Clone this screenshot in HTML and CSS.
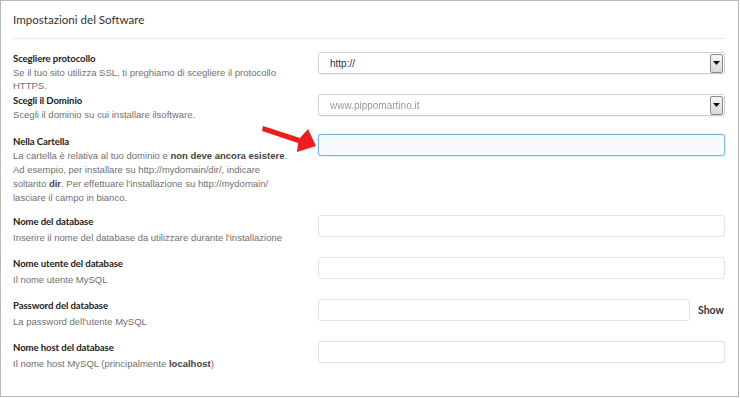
FILE: index.html
```html
<!DOCTYPE html>
<html lang="it">
<head>
<meta charset="utf-8">
<title>Impostazioni del Software</title>
<link rel="stylesheet" href="styles.css">
</head>
<body>
<div class="frame">
  <h2 class="title">Impostazioni del Software</h2>
  <div class="divider"></div>
  <div class="form">
    <div class="row r1">
      <div class="info">
        <div class="label">Scegliere protocollo</div>
        <div class="desc tight">Se il tuo sito utilizza SSL, ti preghiamo di scegliere il protocollo HTTPS.</div>
      </div>
      <div class="field">
        <div class="select"><span class="val">http://</span><span class="drop"><svg width="7" height="4" viewBox="0 0 7 4"><path d="M0 0H7L3.5 4Z" fill="#111"/></svg></span></div>
      </div>
    </div>
    <div class="row r2">
      <div class="info">
        <div class="label">Scegli il Dominio</div>
        <div class="desc">Scegli il dominio su cui installare ilsoftware.</div>
      </div>
      <div class="field">
        <div class="select"><span class="val blur">www.pippomartino.it</span><span class="drop"><svg width="7" height="4" viewBox="0 0 7 4"><path d="M0 0H7L3.5 4Z" fill="#111"/></svg></span></div>
      </div>
    </div>
    <div class="row r3">
      <div class="info">
        <div class="label">Nella Cartella</div>
        <div class="desc">La cartella è relativa al tuo dominio e <b>non deve ancora esistere</b>. Ad esempio, per installare su http://mydomain/dir/, indicare soltanto <b>dir</b>. Per effettuare l'installazione su http://mydomain/ lasciare il campo in bianco.</div>
      </div>
      <div class="field">
        <div class="input focus"></div>
      </div>
      <svg class="arrow" width="70" height="32" viewBox="0 0 70 32">
        <path d="M12 0 L49 12 L57 3 L65 20 L46 26 L47 17 L11 5 Z" fill="#ee1c1c"/>
      </svg>
    </div>
    <div class="row r4 after3">
      <div class="info">
        <div class="label">Nome del database</div>
        <div class="desc">Inserire il nome del database da utilizzare durante l'installazione</div>
      </div>
      <div class="field"><div class="input"></div></div>
    </div>
    <div class="row r4">
      <div class="info">
        <div class="label">Nome utente del database</div>
        <div class="desc">Il nome utente MySQL</div>
      </div>
      <div class="field"><div class="input"></div></div>
    </div>
    <div class="row r4">
      <div class="info">
        <div class="label">Password del database</div>
        <div class="desc">La password dell'utente MySQL</div>
      </div>
      <div class="field pw"><div class="input"></div><span class="show">Show</span></div>
    </div>
    <div class="row r4">
      <div class="info">
        <div class="label">Nome host del database</div>
        <div class="desc">Il nome host MySQL (principalmente <b>localhost</b>)</div>
      </div>
      <div class="field"><div class="input"></div></div>
    </div>
  </div>
</div>
</body>
</html>
```

FILE: styles.css
```css
* { box-sizing: border-box; }
html, body { margin: 0; padding: 0; background: #fff; }
.frame {
  width: 739px;
  height: 397px;
  border: 1px solid #b8b8b8;
  padding: 0 12px 0 12px;
  font-family: "Liberation Sans", Arial, sans-serif;
  position: relative;
}
.title {
  margin: 0;
  padding-top: 10px;
  height: 37px;
  font-family: Lato, "Open Sans", sans-serif;
  font-weight: 400;
  font-size: 11.6px;
  line-height: 17px;
  color: #333;
}
.divider {
  height: 1px;
  background: #e8e8e8;
}
.form { display: flex; flex-direction: column; }
.row {
  display: grid;
  grid-template-columns: 305px 407px;
  position: relative;
}
.r1 { margin-top: 12px; }
.r2 { margin-top: 1px; }
.r3 { margin-top: 12px; }
.r4 { margin-top: 11px; }
.r4.after3 { margin-top: 9px; }
.label {
  font-family: Lato, "Open Sans", sans-serif;
  font-weight: 700;
  font-size: 9.6px;
  letter-spacing: -0.1px;
  line-height: 15px;
  color: #222;
}
.desc {
  font-size: 9.5px;
  line-height: 14px;
  color: #707070;
  max-width: 278px;
}
.r4 .desc { margin-top: 2px; }
.desc.tight { line-height: 13px; }
.desc b { color: #444; font-weight: 700; }
.field { display: flex; align-items: flex-start; padding-top: 1px; }
.r3 .field { padding-top: 0; }
.select {
  width: 407px;
  height: 22px;
  border: 1px solid #cfcfcf;
  border-radius: 3px;
  box-shadow: 0 1px 1px rgba(0,0,0,0.06);
  display: flex;
  align-items: center;
  justify-content: space-between;
  padding: 0 1px 0 11px;
  font-size: 10px;
  color: #333;
}
.val.blur { color: #999; filter: blur(0.7px); }
.drop {
  width: 13px;
  height: 19px;
  border: 1px solid #8a8a8a;
  border-radius: 2px;
  background: linear-gradient(#f6f6f6, #d8d8d8);
  display: flex;
  align-items: center;
  justify-content: center;
}
.input {
  width: 407px;
  height: 22px;
  border: 1px solid #e2e2e2;
  border-radius: 3px;
  background: #fff;
}
.input.focus {
  border-color: #76b4e6;
  background: #f8fbfd;
  box-shadow: 0 0 2px rgba(82,168,236,0.5);
}
.pw .input { width: 372px; }
.show {
  font-family: Lato, "Open Sans", sans-serif;
  font-weight: 700;
  font-size: 10.5px;
  line-height: 22px;
  color: #333;
  margin-left: 8px;
}
.arrow {
  position: absolute;
  left: 238px;
  top: -8px;
}
```
